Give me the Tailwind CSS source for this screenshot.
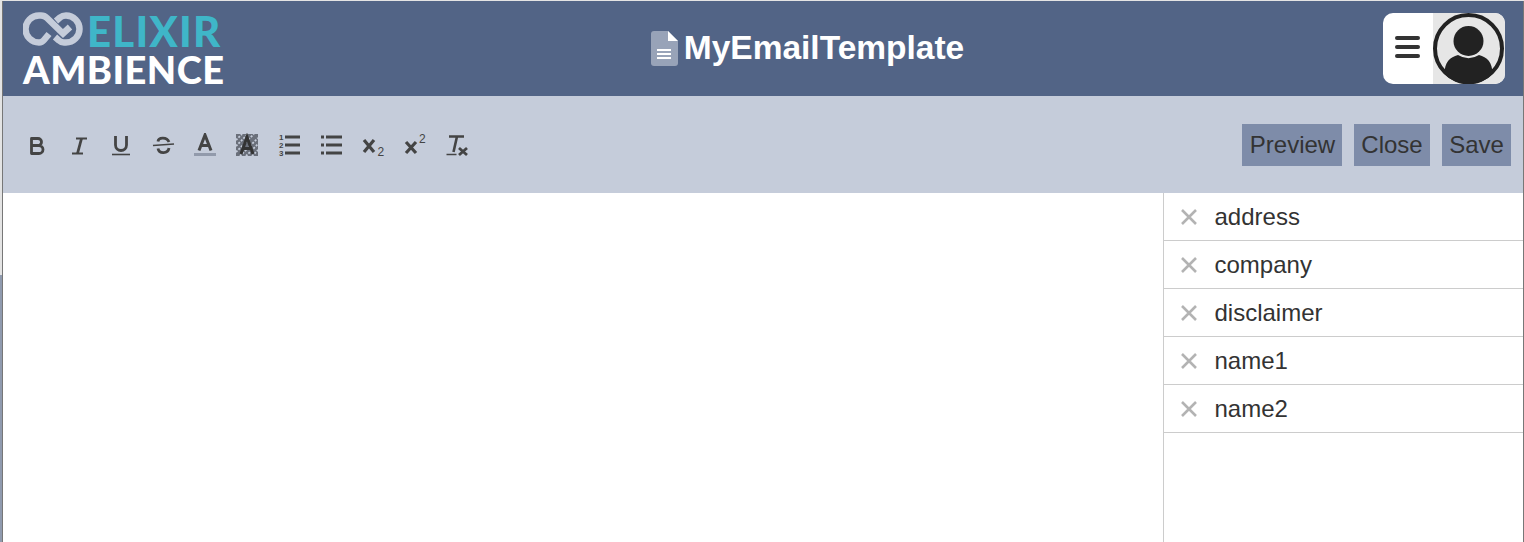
<!DOCTYPE html>
<html>
<head>
<meta charset="utf-8">
<script src="https://cdn.jsdelivr.net/npm/@tailwindcss/browser@4"></script>
</head>
<body class="relative m-0 h-[542px] w-[1524px] overflow-hidden bg-[#e4e4e4] font-['Liberation_Sans',Arial,sans-serif] text-[#333]">
<div class="absolute bottom-0 left-0 top-[275px] w-[2px] bg-[#8f9aae]"></div>
<div class="relative ml-[2px] mt-[1px] flex h-[541px] w-[1522px] flex-col border-x border-[#777] bg-white">
  <header class="flex h-[95px] shrink-0 items-center justify-between bg-[#526486]">
    <div class="mt-[4px] flex w-[240px] flex-col pl-[20px] font-['Lato',sans-serif] font-black leading-none">
      <div class="flex h-[36px] items-center">
        <svg width="62" height="36" viewBox="0 0 62 36" fill="none" stroke="#c5ccda" stroke-width="6.5" class="mt-[-2px] mr-[2px] shrink-0">
          <path d="M26 22L21 28Q19 30.5 16 30.5A13.5 13.5 0 0 1 16 3.5H18Q21.5 3.5 24 6L40 21.5L47 15"/>
          <path d="M33 9L37 5.5Q39.5 3.5 43 3.5A13.5 13.5 0 0 1 43 30.5H41Q38 30.5 36 28.5L32 25"/>
        </svg>
        <span class="text-[42px] tracking-[1.2px] text-[#3fb6c8]">ELIXIR</span>
      </div>
      <div class="mt-[1px] text-[38px] tracking-[0.5px] text-white">AMBIENCE</div>
    </div>
    <div class="mb-[1px] flex items-center gap-[6px] pr-[11px]">
      <svg width="27" height="35" viewBox="0 0 27 35" class="shrink-0">
        <path d="M3 0 H17 L27 10 V32 A3 3 0 0 1 24 35 H3 A3 3 0 0 1 0 32 V3 A3 3 0 0 1 3 0 Z" fill="#98a3b8"/>
        <path d="M17 0 L27 10 H17 Z" fill="#fff"/>
        <rect x="6" y="18" width="14" height="2" fill="#fff"/>
        <rect x="6" y="22" width="14" height="2" fill="#fff"/>
        <rect x="6" y="26" width="14" height="2" fill="#fff"/>
      </svg>
      <h1 class="text-[33.5px] font-bold leading-none text-white">MyEmailTemplate</h1>
    </div>
    <div class="mr-[18px] flex h-[71px] w-[122px] overflow-hidden rounded-[10px] bg-white">
      <div class="flex w-[50px] items-center justify-center pb-[3px] pr-[1px]">
        <div class="flex w-[25px] flex-col gap-[5px]">
          <span class="block h-[4px] rounded-full bg-[#333]"></span>
          <span class="block h-[4px] rounded-full bg-[#333]"></span>
          <span class="block h-[4px] rounded-full bg-[#333]"></span>
        </div>
      </div>
      <div class="flex flex-1 items-center justify-center bg-[#e6e6e6]">
        <svg width="72" height="71" viewBox="0 0 72 71">
          <circle cx="35.5" cy="35.5" r="33.5" fill="#e6e6e6" stroke="#222" stroke-width="4"/>
          <circle cx="35.5" cy="28" r="15" fill="#222"/>
          <path d="M11.5 61 C11.5 49 17 44 25 42 Q35.5 48.5 46 42 C54 44 59.5 49 59.5 61 A33 33 0 0 1 11.5 61 Z" fill="#222"/>
        </svg>
      </div>
    </div>
  </header>
  <div class="flex h-[97px] shrink-0 items-center justify-between bg-[#c5ccda] pl-[13px] pr-[12px]">
    <div class="flex items-center">
      <button class="flex h-[24px] w-[42px] items-center justify-center"><svg width="24" height="24" viewBox="0 0 24 24" fill="none" stroke="#444" stroke-width="2.8" stroke-linejoin="round"><path d="M6.5 5.5H13A3.5 3.5 0 0 1 13 12.5H6.5ZM6.5 12.5H14A4 4 0 0 1 14 20.5H6.5Z"/></svg></button>
      <button class="flex h-[24px] w-[42px] items-center justify-center"><svg width="24" height="24" viewBox="0 0 24 24" fill="none" stroke="#444"><path stroke-width="2.2" d="M9 5.5H20M5 20.5H16"/><path stroke-width="2.8" d="M14.5 5.5L10.5 20.5"/></svg></button>
      <button class="flex h-[24px] w-[42px] items-center justify-center"><svg width="24" height="24" viewBox="0 0 24 24" fill="none" stroke="#444"><path stroke-width="2.8" d="M6.5 3V12A5.5 5.5 0 0 0 17.5 12V3"/><path stroke-width="1.6" d="M3 21.5H21"/></svg></button>
      <button class="flex h-[24px] w-[42px] items-center justify-center"><svg width="24" height="24" viewBox="0 0 24 24" fill="none" stroke="#444"><path stroke-width="2.8" d="M18 9C16 4 7.5 4 7 8.5M7 15.5C8 21 17 21 18 15"/><path stroke-width="1.7" d="M2 12.5L23 11"/></svg></button>
      <button class="flex h-[24px] w-[42px] items-center justify-center"><svg width="24" height="24" viewBox="0 0 24 24" fill="none"><path stroke="#444" stroke-width="3" d="M6 17.5L12 2L18 17.5M8 12.5H16"/><rect x="1" y="20" width="22" height="3" fill="#929aab"/></svg></button>
      <button class="flex h-[24px] w-[42px] items-center justify-center"><svg width="24" height="24" viewBox="0 0 24 24" fill="none"><rect x="1" y="1" width="22" height="22" fill="#6a6f7a"/><path stroke="#c5ccda" stroke-width="1.8" stroke-dasharray="2 1.5" d="M1 7L7 1M1 13L13 1M1 19L19 1M5 23L23 5M11 23L23 11M17 23L23 17"/><path stroke="#333" stroke-width="3" d="M6 21L12 4L18 21M8 15.5H16"/></svg></button>
      <button class="flex h-[24px] w-[42px] items-center justify-center"><svg width="22" height="22" viewBox="0 0 22 22" fill="none" class="overflow-visible"><path stroke="#444" stroke-width="3" d="M7 3H22M7 11H22M7 19H22"/><text x="1" y="5.5" font-size="8" font-weight="700" fill="#444" font-family="Liberation Sans">1</text><text x="1" y="13.5" font-size="8" font-weight="700" fill="#444" font-family="Liberation Sans">2</text><text x="1" y="21.5" font-size="8" font-weight="700" fill="#444" font-family="Liberation Sans">3</text></svg></button>
      <button class="flex h-[24px] w-[42px] items-center justify-center"><svg width="22" height="22" viewBox="0 0 22 22" fill="none" stroke="#444" stroke-width="3"><path d="M6 3H22M6 11H22M6 19H22M1 3H4M1 11H4M1 19H4"/></svg></button>
      <button class="flex h-[24px] w-[42px] items-center justify-center"><svg width="24" height="24" viewBox="0 0 24 24" fill="none" class="overflow-visible"><path stroke="#444" stroke-width="3.2" d="M3 7L13 19M13 7L3 19"/><text x="16.5" y="23" font-size="12" fill="#444" font-family="Liberation Sans">2</text></svg></button>
      <button class="flex h-[24px] w-[42px] items-center justify-center"><svg width="24" height="24" viewBox="0 0 24 24" fill="none" class="overflow-visible"><path stroke="#444" stroke-width="3.2" d="M3 9L13 20M13 9L3 20"/><text x="16" y="10" font-size="12" fill="#444" font-family="Liberation Sans">2</text></svg></button>
      <button class="flex h-[24px] w-[42px] items-center justify-center"><svg width="24" height="24" viewBox="0 0 24 24" fill="none" stroke="#444"><path stroke-width="2.6" d="M4 3.5H19M12 3.5L8.5 19"/><path stroke-width="1.5" d="M1.5 21.5H11.5"/><path stroke-width="2.8" d="M14 15L22 22M22 15L14 22"/></svg></button>
    </div>
    <div class="flex gap-[12px] text-[24px] leading-none text-[#333]">
      <button class="flex h-[42px] w-[100px] items-center justify-center bg-[#7e8ca9] pl-[1px]">Preview</button>
      <button class="flex h-[42px] w-[76px] items-center justify-center bg-[#7e8ca9]">Close</button>
      <button class="flex h-[42px] w-[69px] items-center justify-center bg-[#7e8ca9]">Save</button>
    </div>
  </div>
  <div class="flex min-h-0 flex-1">
    <main class="flex-1 bg-white"></main>
    <aside class="w-[360px] shrink-0 border-l border-[#ccc] bg-white text-[24px] leading-none text-[#333]">
      <div class="flex h-[48px] items-center border-b border-[#ccc] pl-[16px]"><svg width="18" height="18" viewBox="0 0 18 18" stroke="#b3b3b3" stroke-width="2.6" class="mr-[16.5px] shrink-0"><path d="M2 2L16 16M16 2L2 16"/></svg>address</div>
      <div class="flex h-[48px] items-center border-b border-[#ccc] pl-[16px]"><svg width="18" height="18" viewBox="0 0 18 18" stroke="#b3b3b3" stroke-width="2.6" class="mr-[16.5px] shrink-0"><path d="M2 2L16 16M16 2L2 16"/></svg>company</div>
      <div class="flex h-[48px] items-center border-b border-[#ccc] pl-[16px]"><svg width="18" height="18" viewBox="0 0 18 18" stroke="#b3b3b3" stroke-width="2.6" class="mr-[16.5px] shrink-0"><path d="M2 2L16 16M16 2L2 16"/></svg>disclaimer</div>
      <div class="flex h-[48px] items-center border-b border-[#ccc] pl-[16px]"><svg width="18" height="18" viewBox="0 0 18 18" stroke="#b3b3b3" stroke-width="2.6" class="mr-[16.5px] shrink-0"><path d="M2 2L16 16M16 2L2 16"/></svg>name1</div>
      <div class="flex h-[48px] items-center border-b border-[#ccc] pl-[16px]"><svg width="18" height="18" viewBox="0 0 18 18" stroke="#b3b3b3" stroke-width="2.6" class="mr-[16.5px] shrink-0"><path d="M2 2L16 16M16 2L2 16"/></svg>name2</div>
    </aside>
  </div>
</div>
</body>
</html>
